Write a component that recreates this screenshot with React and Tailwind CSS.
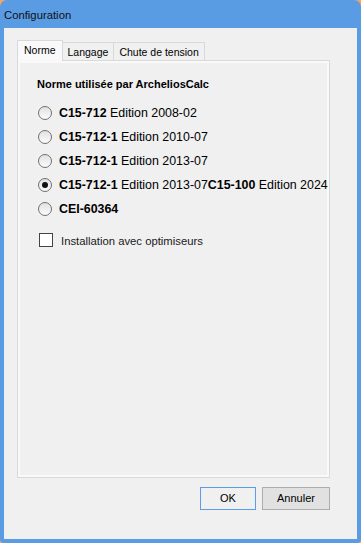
const ROWS = [
  { id: 'c15712', parts: [['C15-712', true], [' Edition 2008-02', false]] },
  { id: 'c157121a', parts: [['C15-712-1', true], [' Edition 2010-07', false]] },
  { id: 'c157121b', parts: [['C15-712-1', true], [' Edition 2013-07', false]] },
  {
    id: 'c15100',
    parts: [
      ['C15-712-1', true],
      [' Edition 2013-07', false],
      ['C15-100', true],
      [' Edition 2024', false],
    ],
  },
  { id: 'cei', parts: [['CEI-60364', true]] },
];

const SELECTED = 'c15100';

function Radio({ checked }) {
  return (
    <span className="flex h-[14px] w-[14px] shrink-0 items-center justify-center rounded-full border border-[#707070] bg-gradient-to-b from-[#e2e2e2] to-[#fbfbfb]">
      {checked && <span className="h-[6px] w-[6px] rounded-full bg-[#111]" />}
    </span>
  );
}

function Tab({ label, active }) {
  if (active) {
    return (
      <div className="relative z-10 -mb-px flex h-[21px] items-start border border-b-0 border-[#d9d9d9] bg-[#f9f9f9] px-[6px] pt-[3px] text-[10.5px] leading-[13px]">
        {label}
      </div>
    );
  }
  return (
    <div className="mt-[2px] flex h-[18px] items-start border border-b-0 border-l-0 border-[#d9d9d9] bg-[#f0f0f0] px-[5px] pt-[3px] text-[10.5px] leading-[13px]">
      {label}
    </div>
  );
}

export default function App() {
  return (
    <div
      className="h-[543px] w-[361px] bg-[#f2a46c] text-black"
      style={{ fontFamily: '"Liberation Sans", Arial, sans-serif' }}
    >
      <div className="flex h-full flex-col rounded-t-[7px] rounded-b-[4px] bg-[#599ce4]">
        <div className="flex h-[28px] items-center px-[4px] pt-[2px] text-[11.3px] text-[#111]">
          Configuration
        </div>
        <div className="mx-[4px] mb-[4px] flex flex-1 flex-col bg-[#f0f0f0] pl-[13px] pr-[27px] pt-[12px]">
          <div className="flex h-[20px] items-end">
            <Tab label="Norme" active />
            <Tab label="Langage" />
            <Tab label="Chute de tension" />
          </div>
          <div className="h-[418px] border border-[#d9d9d9] bg-[#f0f0f0] shadow-[inset_0_0_0_2px_#f9f9f9]">
            <div className="flex flex-col pl-[19px] pt-[15px]">
              <div className="flex h-[16px] items-center text-[11px] font-bold">
                Norme utilisée par ArcheliosCalc
              </div>
              <div className="mt-[9px] flex flex-col">
                {ROWS.map((row) => (
                  <div key={row.id} className="flex h-[24px] items-center pl-[1px]">
                    <Radio checked={row.id === SELECTED} />
                    <span className="ml-[7px] whitespace-pre text-[12.4px]">
                      {row.parts.map(([t, b], i) => (
                        <span key={i} className={b ? 'font-bold' : ''}>
                          {t}
                        </span>
                      ))}
                    </span>
                  </div>
                ))}
              </div>
              <div className="mt-[7px] flex h-[24px] items-center pl-[2px]">
                <span className="h-[14px] w-[14px] shrink-0 border border-[#444] bg-white" />
                <span className="ml-[8px] pt-[2px] text-[11.3px] text-[#1a1a1a]">
                  Installation avec optimiseurs
                </span>
              </div>
            </div>
          </div>
          <div className="mt-[9px] flex justify-end gap-[6px]">
            <button className="flex h-[23px] w-[56px] items-center justify-center border border-[#5a9ee8] bg-[#f0f0f0] text-[11px]">
              OK
            </button>
            <button className="flex h-[23px] w-[68px] items-center justify-center border border-[#adadad] bg-[#e1e1e1] text-[11px]">
              Annuler
            </button>
          </div>
        </div>
      </div>
    </div>
  );
}
